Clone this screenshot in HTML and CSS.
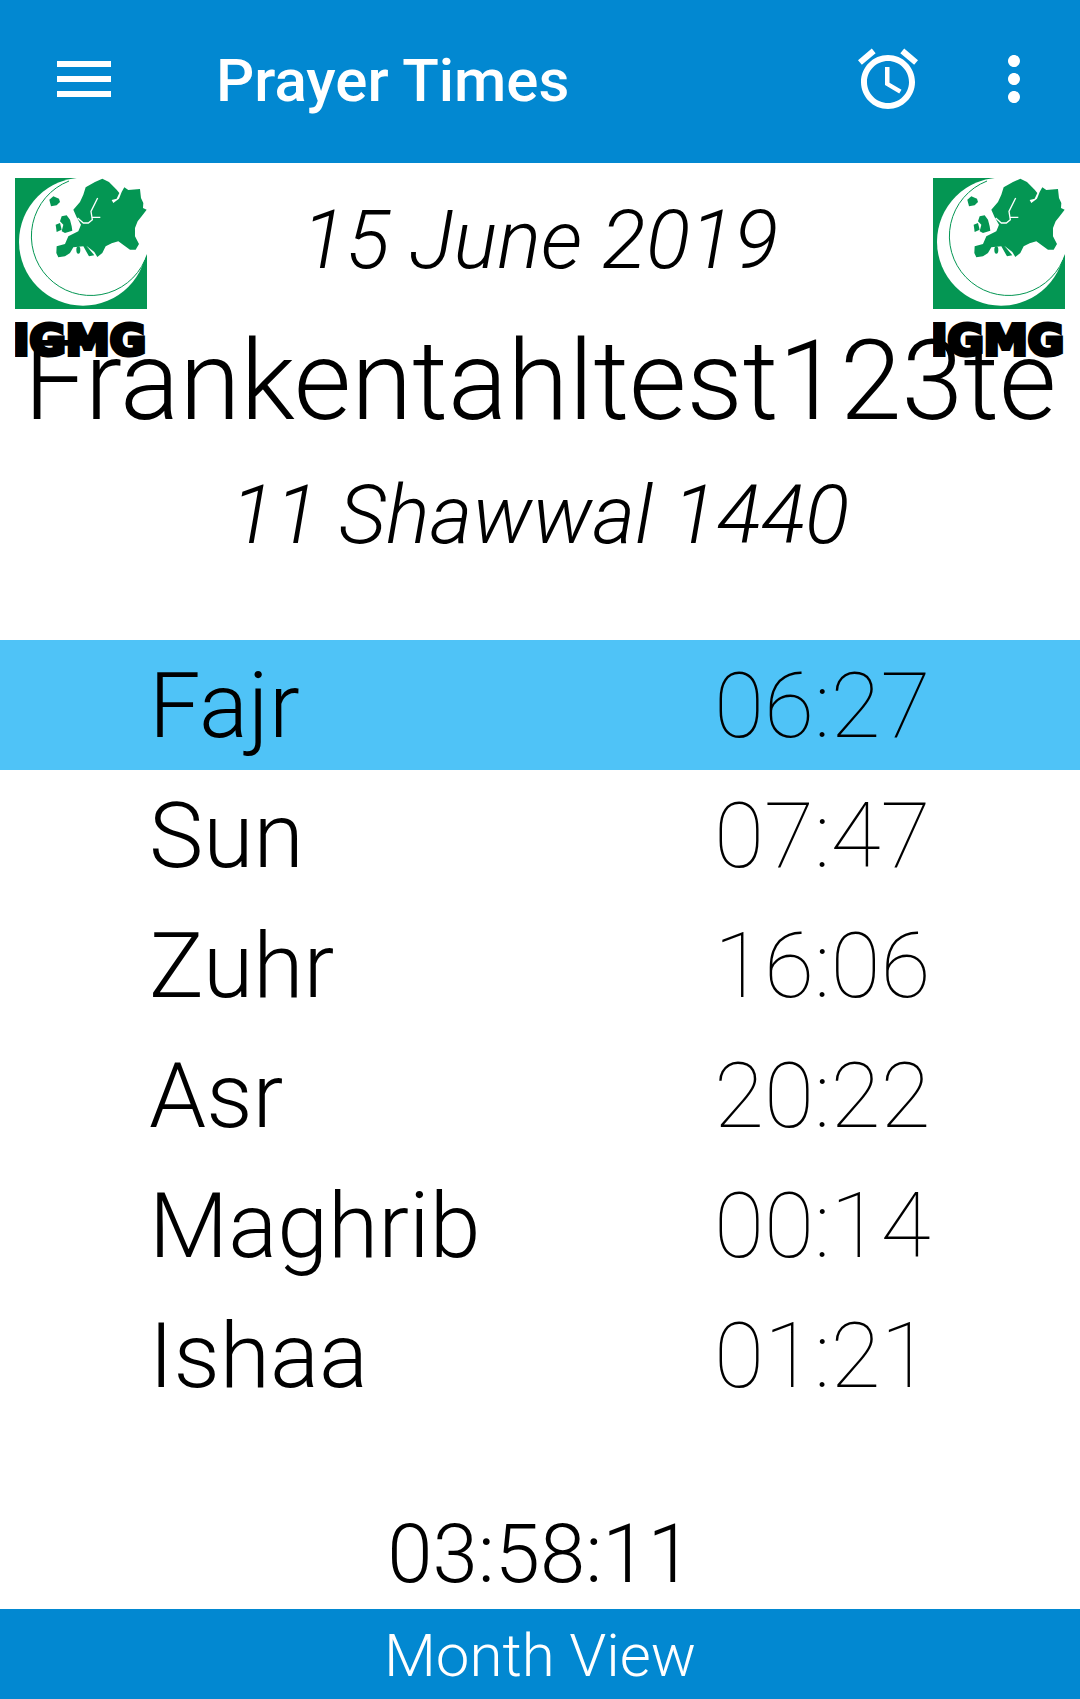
FILE: index.html
```html
<!DOCTYPE html>
<html lang="en">

<head>
  <meta charset="UTF-8">
  <title>Prayer Times</title>
  <link rel="stylesheet" href="styles.css">
</head>

<body>
  <div class="app">
    <svg width="0" height="0" class="defs">
      <symbol id="logo" viewBox="0 0 132 182">
        <rect width="132" height="131" fill="#049653"></rect>
        <clipPath id="square"><rect width="132" height="131"></rect></clipPath>
        <g clip-path="url(#square)">
          <circle cx="68" cy="63.7" r="64" fill="#fff"></circle>
          <rect x="62.6" y="0" width="70" height="66" fill="#fff"></rect>
          <path d="M100 60H132V76L127 87Z" fill="#fff"></path>
          <path d="M54 3A59.3 59.3 0 1 0 130 82" fill="none" stroke="#049653" stroke-width="1"></path>
        </g>
        <g transform="scale(.3333)" fill="#049653">
          <path d="M262 2L282 12L305 35L313 45L305 62L290 66L295 75L312 62L320 42L328 28L340 36L375 33L378 60L385 75L384 90L395 95L380 115L368 130L360 150L360 175L372 198L362 215L345 215L310 190L290 196L272 205L262 225L247 237L238 222L214 203L238 232L222 235L205 205L175 208L165 225L150 235L130 238L124 225L125 205L150 198L160 175L190 160L198 140L185 118L175 95L195 72L205 50L212 28L240 12Z"></path>
          <path d="M188 120L205 135L220 135L232 125L228 100L248 60M232 118L256 118" fill="none" stroke="#fff" stroke-width="4"></path>
          <ellipse cx="190" cy="216" rx="6" ry="11"></ellipse>
          <path d="M140 115L155 112L165 125L170 145L172 158L150 165L140 160L145 140L135 130Z"></path>
          <path d="M122 140L135 135L140 155L125 162Z"></path>
          <path d="M103 65L115 55L132 62L135 72L125 82L108 85Z"></path>
        </g>
        <text x="-2" y="177" class="logo-text" textLength="133" lengthAdjust="spacingAndGlyphs">IGMG</text>
      </symbol>
    </svg>

    <header class="appbar">
      <svg class="icon menu" viewBox="0 0 24 24"><path d="M3 18h18v-2H3v2zm0-5h18v-2H3v2zm0-7v2h18V6H3z"></path></svg>
      <div class="appbar-title">Prayer Times</div>
      <svg class="icon alarm" viewBox="0 0 24 24"><path d="M22 5.72l-4.6-3.86-1.29 1.53 4.6 3.86L22 5.72zM7.88 3.39L6.6 1.86 2 5.71l1.29 1.53 4.59-3.85zM12.5 8H11v6l4.75 2.85.75-1.23-4-2.37V8zM12 4c-4.97 0-9 4.03-9 9s4.03 9 9 9 9-4.03 9-9-4.03-9-9-9zm0 16c-3.87 0-7-3.13-7-7s3.13-7 7-7 7 3.13 7 7-3.13 7-7 7z"></path></svg>
      <svg class="icon more" viewBox="0 0 24 24"><path d="M12 8c1.1 0 2-.9 2-2s-.9-2-2-2-2 .9-2 2 .9 2 2 2zm0 2c-1.1 0-2 .9-2 2s.9 2 2 2 2-.9 2-2-.9-2-2-2zm0 6c-1.1 0-2 .9-2 2s.9 2 2 2 2-.9 2-2-.9-2-2-2z"></path></svg>
    </header>

    <section class="info">
      <svg class="logo logo-left"><use href="#logo"></use></svg>
      <svg class="logo logo-right"><use href="#logo"></use></svg>
      <div class="date">15 June 2019</div>
      <div class="place">Frankentahltest123te</div>
      <div class="date hijri">11 Shawwal 1440</div>
    </section>

    <section class="times">
      <div class="row current"><span class="name">Fajr</span><span class="time">06:27</span></div>
      <div class="row"><span class="name">Sun</span><span class="time">07:47</span></div>
      <div class="row"><span class="name">Zuhr</span><span class="time">16:06</span></div>
      <div class="row"><span class="name">Asr</span><span class="time">20:22</span></div>
      <div class="row"><span class="name">Maghrib</span><span class="time">00:14</span></div>
      <div class="row"><span class="name">Ishaa</span><span class="time">01:21</span></div>
    </section>

    <div class="countdown">03:58:11</div>
    <div class="month-view">Month View</div>
  </div>
</body>

</html>
```

FILE: styles.css
```css
* {
  margin: 0;
  padding: 0;
  box-sizing: border-box;
}
html, body {
  width: 1080px;
  height: 1699px;
  overflow: hidden;
  background: #fff;
}
body {
  font-family: Roboto, "Liberation Sans", sans-serif;
  color: #000;
}
.app {
  width: 1080px;
  height: 1699px;
  display: flex;
  flex-direction: column;
}
.defs {
  position: absolute;
}
.appbar {
  height: 163px;
  flex: none;
  background: #0288d1;
  display: flex;
  align-items: center;
  padding: 0 30px 6px 48px;
}
.icon {
  width: 72px;
  height: 72px;
  fill: #fff;
  flex: none;
}
.appbar-title {
  flex: 1;
  margin: 4px 0 0 96px;
  font-size: 60px;
  font-weight: 500;
  color: #fff;
}
.more {
  margin-left: 54px;
}
.info {
  position: relative;
  height: 477px;
  flex: none;
  text-align: center;
}
.logo {
  position: absolute;
  top: 15px;
  width: 132px;
  height: 182px;
}
.logo-left {
  left: 15px;
}
.logo-right {
  right: 15px;
}
.logo-text {
  font-family: "DejaVu Sans", sans-serif;
  font-weight: 700;
  font-size: 42px;
  fill: #000;
  stroke: #000;
  stroke-width: 4px;
}
.date {
  font-size: 82px;
  font-weight: 300;
  font-style: italic;
  line-height: 96px;
  margin-top: 29px;
}
.place {
  font-size: 111px;
  font-weight: 300;
  line-height: 131px;
  white-space: nowrap;
  margin-top: 28px;
}
.date.hijri {
  margin-top: 20px;
}
.times {
  flex: none;
}
.row {
  height: 130px;
  display: flex;
  align-items: center;
  padding-left: 149px;
  font-size: 91.5px;
}
.current {
  background: #4fc3f7;
}
.name {
  width: 565px;
  font-weight: 300;
}
.time {
  font-weight: 100;
}
.countdown {
  flex: 1;
  display: flex;
  align-items: flex-end;
  justify-content: center;
  padding-bottom: 8px;
  font-size: 81.5px;
  font-weight: 300;
  line-height: 94px;
}
.month-view {
  height: 90px;
  flex: none;
  background: #0288d1;
  color: #fff;
  text-align: center;
  font-size: 60px;
  font-weight: 300;
  line-height: 94px;
}
```
